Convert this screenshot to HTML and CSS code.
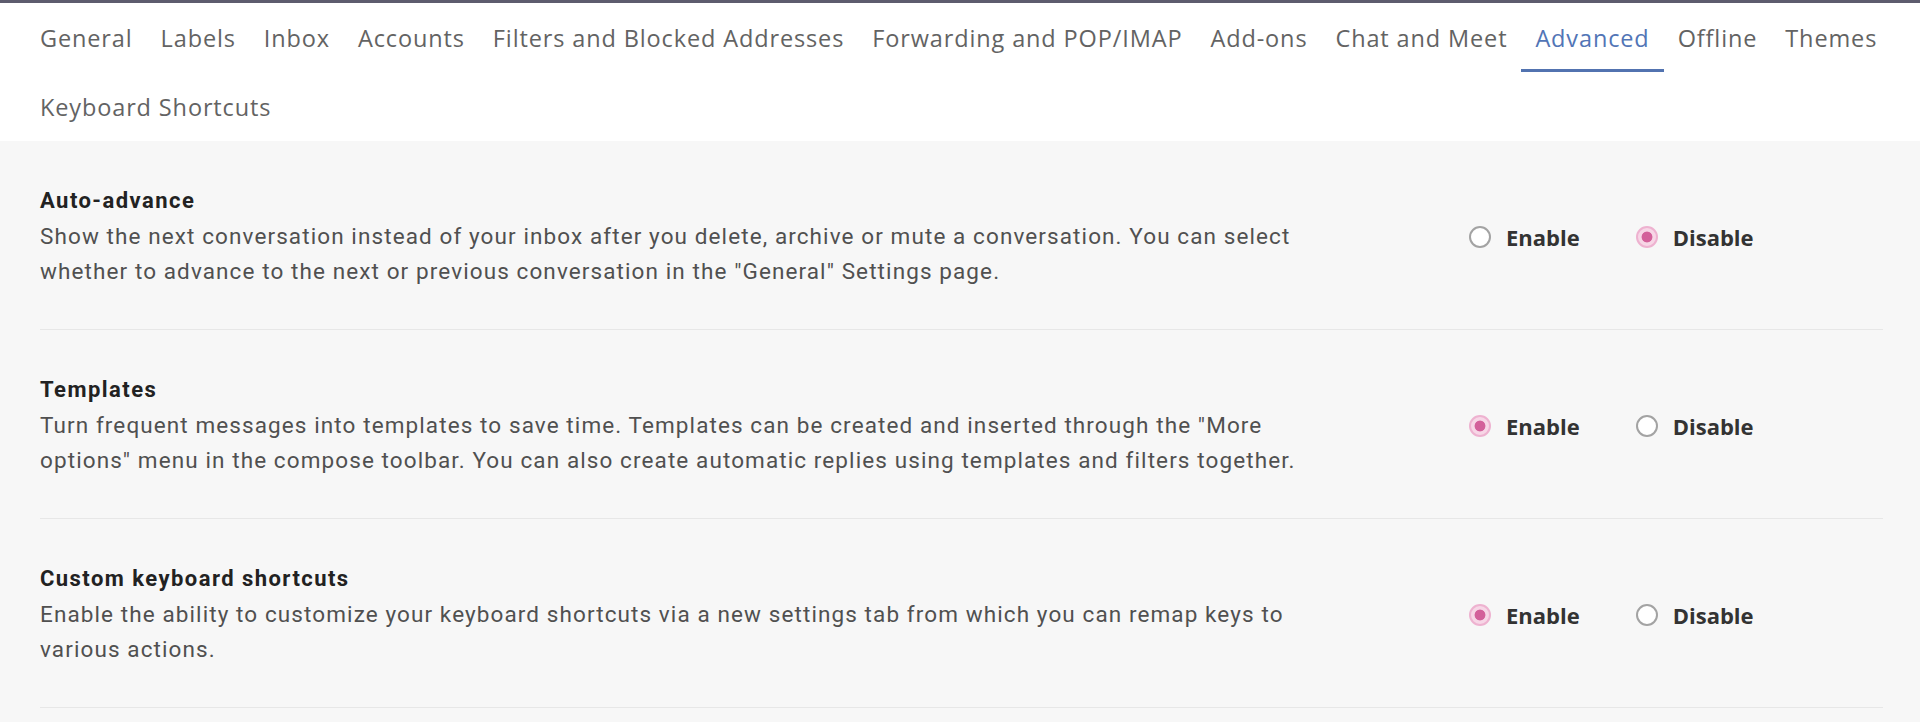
FILE: index.html
```html
<!DOCTYPE html>
<html lang="en">
<head>
<meta charset="utf-8">
<title>Settings - Advanced</title>
<link rel="stylesheet" href="styles.css">
</head>
<body>
<header class="tabs-bar">
  <nav class="tabs">
    <a class="tab">General</a>
    <a class="tab">Labels</a>
    <a class="tab">Inbox</a>
    <a class="tab">Accounts</a>
    <a class="tab">Filters and Blocked Addresses</a>
    <a class="tab">Forwarding and POP/IMAP</a>
    <a class="tab">Add-ons</a>
    <a class="tab">Chat and Meet</a>
    <a class="tab tab-active">Advanced</a>
    <a class="tab">Offline</a>
    <a class="tab">Themes</a>
    <a class="tab">Keyboard Shortcuts</a>
  </nav>
</header>
<main class="settings">
  <section class="setting">
    <div class="setting-text">
      <h2 class="setting-title">Auto-advance</h2>
      <p class="setting-desc">Show the next conversation instead of your inbox after you delete, archive or mute a conversation. You can select whether to advance to the next or previous conversation in the "General" Settings page.</p>
    </div>
    <div class="options">
      <label class="option"><span class="radio"></span><span class="option-label">Enable</span></label>
      <label class="option"><span class="radio radio-on"></span><span class="option-label">Disable</span></label>
    </div>
  </section>
  <section class="setting">
    <div class="setting-text">
      <h2 class="setting-title">Templates</h2>
      <p class="setting-desc">Turn frequent messages into templates to save time. Templates can be created and inserted through the "More options" menu in the compose toolbar. You can also create automatic replies using templates and filters together.</p>
    </div>
    <div class="options">
      <label class="option"><span class="radio radio-on"></span><span class="option-label">Enable</span></label>
      <label class="option"><span class="radio"></span><span class="option-label">Disable</span></label>
    </div>
  </section>
  <section class="setting">
    <div class="setting-text">
      <h2 class="setting-title">Custom keyboard shortcuts</h2>
      <p class="setting-desc">Enable the ability to customize your keyboard shortcuts via a new settings tab from which you can remap keys to various actions.</p>
    </div>
    <div class="options">
      <label class="option"><span class="radio radio-on"></span><span class="option-label">Enable</span></label>
      <label class="option"><span class="radio"></span><span class="option-label">Disable</span></label>
    </div>
  </section>
</main>
</body>
</html>
```
FILE: styles.css
```css
* { box-sizing: border-box; }

html, body {
  margin: 0;
  padding: 0;
}

body {
  background: #f7f7f7;
  font-family: Roboto, "Liberation Sans", sans-serif;
  height: 722px;
  overflow: hidden;
}

.tabs-bar {
  background: #ffffff;
  border-top: 3px solid #5d5c6e;
}

.tabs {
  display: flex;
  flex-wrap: wrap;
  padding: 0 0 0 26px;
}

.tab {
  display: flex;
  align-items: center;
  height: 69px;
  padding: 4px 14px 0;
  font-family: "Open Sans", sans-serif;
  font-size: 23.5px;
  letter-spacing: 0.87px;
  color: #636363;
  border-bottom: 3px solid transparent;
  white-space: nowrap;
}

.tab-active {
  color: #5275b6;
  border-bottom-color: #5273b0;
}

.settings {
  padding: 0 37px 0 40px;
}

.setting {
  display: grid;
  grid-template-columns: 1fr 414px;
  padding: 42px 0 40px;
  border-bottom: 1px solid #e7e7e7;
}

.setting-text {
  max-width: 1272px;
}

.setting-title {
  margin: 0;
  font-size: 22px;
  letter-spacing: 1.45px;
  line-height: 36px;
  font-weight: 700;
  color: #222222;
}

.setting-desc {
  margin: 0;
  font-size: 22.5px;
  letter-spacing: 1.1px;
  line-height: 35px;
  color: #505050;
}

.options {
  display: flex;
  align-items: center;
  height: 35px;
  margin-top: 36px;
}

.option {
  display: flex;
  align-items: center;
  margin-right: 56px;
}

.radio {
  width: 22px;
  height: 22px;
  border-radius: 50%;
  border: 2px solid #a3a3a3;
  background: #ffffff;
  margin-right: 15px;
  flex: none;
}

.radio-on {
  border-color: #eeb2d0;
  background: radial-gradient(circle, #d3609a 0 5px, #f7d6e6 5.8px);
}

.option-label {
  font-family: "Open Sans", sans-serif;
  font-weight: 700;
  font-size: 22px;
  color: #333333;
}
```
